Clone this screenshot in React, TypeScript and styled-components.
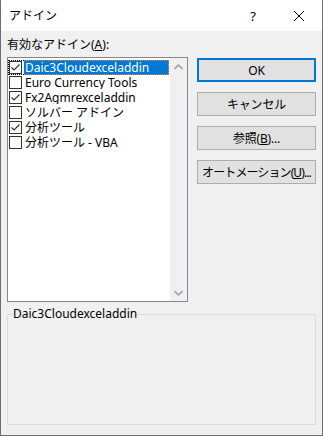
import * as React from 'react';
import styled, { createGlobalStyle } from 'styled-components';

const GlobalStyle = createGlobalStyle`
  html, body {
    margin: 0;
    padding: 0;
    background: #f0f0f0;
  }
  * {
    box-sizing: border-box;
  }
`;

const Window = styled.div`
  width: 323px;
  height: 436px;
  display: flex;
  flex-direction: column;
  background: #f0f0f0;
  border: 1px solid #6d6d6d;
  border-top: none;
  font-family: "Noto Sans", "Noto Sans CJK JP", sans-serif;
  font-size: 12px;
  color: #000;
  overflow: hidden;
`;

const TitleBar = styled.div`
  height: 31px;
  display: flex;
  align-items: center;
  background: #fff;
`;

const Title = styled.div`
  flex: 1;
  padding-left: 8px;
  font-size: 12px;
  line-height: 16px;
`;

const TitleButton = styled.div`
  width: 46px;
  height: 31px;
  display: flex;
  align-items: center;
  justify-content: center;
  font-size: 13px;
`;

const Body = styled.div`
  flex: 1;
  display: flex;
  flex-direction: column;
  padding: 0 6px 0 6px;
`;

const Label = styled.div`
  margin-top: 6px;
  height: 16px;
  line-height: 16px;
`;

const Main = styled.div`
  display: flex;
  margin-top: 4px;
`;

const ListBox = styled.div`
  width: 181px;
  height: 245px;
  border: 1px solid #828790;
  background: #fff;
  display: flex;
`;

const Items = styled.div`
  flex: 1;
  padding-top: 2px;
`;

const Row = styled.div`
  height: 15px;
  display: flex;
  align-items: stretch;
  white-space: nowrap;
`;

const CheckCell = styled.div<{ $focus?: boolean }>`
  width: 16px;
  display: flex;
  align-items: center;
  padding-left: 1px;
  border: 1px dotted ${p => (p.$focus ? '#000' : 'transparent')};
  border-right: none;
`;

const Box = styled.div`
  width: 13px;
  height: 13px;
  border: 1px solid #333;
  background: #fff;
  display: flex;
  align-items: center;
  justify-content: center;
  margin-left: -1px;
`;

const ItemText = styled.div<{ $selected?: boolean }>`
  width: 145px;
  height: 15px;
  padding-left: 1px;
  line-height: 13px;
  overflow: hidden;
  background: ${p => (p.$selected ? '#0078d7' : 'transparent')};
  color: ${p => (p.$selected ? '#fff' : '#000')};
  border: 1px dotted ${p => (p.$selected ? '#ff8728' : 'transparent')};
  border-left: none;
`;

const ScrollBar = styled.div`
  width: 17px;
  background: #f0f0f0;
  display: flex;
  flex-direction: column;
  justify-content: space-between;
`;

const ScrollArrow = styled.div`
  height: 17px;
  display: flex;
  align-items: center;
  justify-content: center;
`;

const ButtonColumn = styled.div`
  margin-left: 9px;
  margin-top: 1px;
  display: flex;
  flex-direction: column;
  gap: 10px;
`;

const Button = styled.div<{ $default?: boolean; $compact?: boolean }>`
  width: 119px;
  height: 24px;
  display: flex;
  align-items: center;
  justify-content: center;
  white-space: nowrap;
  letter-spacing: ${p => (p.$compact ? '-0.9px' : '-0.2px')};
  background: #e1e1e1;
  border: ${p => (p.$default ? '2px solid #0078d7' : '1px solid #adadad')};
`;

const Group = styled.fieldset`
  margin: 5px 0 0 0;
  width: 309px;
  height: 118px;
  border: 1px solid #dcdcdc;
  padding: 0 5px;
`;

const Legend = styled.legend`
  padding: 0;
  line-height: 14px;
`;

const Check = () => (
  <svg width="11" height="11" viewBox="0 0 11 11">
    <polyline points="1.5,5.5 4,8 9.5,2.5" fill="none" stroke="#333" strokeWidth="1.2" />
  </svg>
);

const Chevron = ({ up }: { up?: boolean }) => (
  <svg width="9" height="6" viewBox="0 0 9 6">
    <polyline
      points={up ? '0.5,5 4.5,1 8.5,5' : '0.5,1 4.5,5 8.5,1'}
      fill="none"
      stroke="#a3a3a3"
      strokeWidth="1.6"
    />
  </svg>
);

const items = [
  { name: 'Daic3Cloudexceladdin', checked: true },
  { name: 'Euro Currency Tools', checked: false },
  { name: 'Fx2Agmrexceladdin', checked: true },
  { name: 'ソルバー アドイン', checked: false },
  { name: '分析ツール', checked: true },
  { name: '分析ツール - VBA', checked: false },
];

const App: React.FunctionComponent = () => {
  return (
    <>
      <GlobalStyle />
      <Window>
        <TitleBar>
          <Title>アドイン</Title>
          <TitleButton>?</TitleButton>
          <TitleButton>
            <svg width="10" height="10" viewBox="0 0 10 10">
              <path d="M0 0L10 10M10 0L0 10" stroke="#000" strokeWidth="1" />
            </svg>
          </TitleButton>
        </TitleBar>
        <Body>
          <Label>
            有効なアドイン(<u>A</u>):
          </Label>
          <Main>
            <ListBox>
              <Items>
                {items.map((it, i) => (
                  <Row key={it.name}>
                    <CheckCell $focus={i === 0}>
                      <Box>{it.checked && <Check />}</Box>
                    </CheckCell>
                    <ItemText $selected={i === 0}>{it.name}</ItemText>
                  </Row>
                ))}
              </Items>
              <ScrollBar>
                <ScrollArrow>
                  <Chevron up />
                </ScrollArrow>
                <ScrollArrow>
                  <Chevron />
                </ScrollArrow>
              </ScrollBar>
            </ListBox>
            <ButtonColumn>
              <Button $default>OK</Button>
              <Button>キャンセル</Button>
              <Button>
                <span>
                  参照(<u>B</u>)...
                </span>
              </Button>
              <Button $compact>
                <span>
                  オートメーション(<u>U</u>)...
                </span>
              </Button>
            </ButtonColumn>
          </Main>
          <Group>
            <Legend>Daic3Cloudexceladdin</Legend>
          </Group>
        </Body>
      </Window>
    </>
  );
};

export default App;
